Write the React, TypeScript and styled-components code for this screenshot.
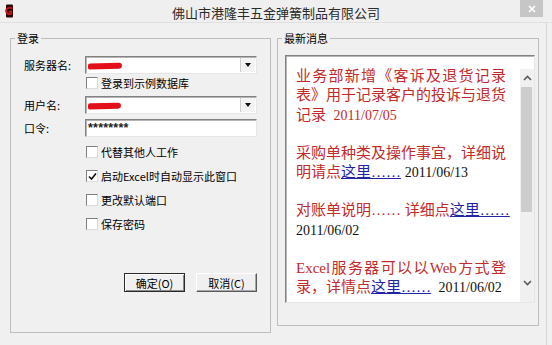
import React from 'react'
import styled, { createGlobalStyle, css } from 'styled-components'

const GlobalStyle = createGlobalStyle`
  html, body {
    margin: 0;
    padding: 0;
    background: #f0f0f0;
  }
  body {
    font-family: "Noto Sans CJK SC", "Liberation Sans", sans-serif;
    color: #000;
  }
`

const App = () => {
  return (
    <Window>
      <GlobalStyle />
      <TitleBar>
        <AppIcon viewBox="0 0 10 14" width="10" height="14">
          <rect x="2" y="0.5" width="7" height="13" rx="1" fill="#2b0707" />
          <path d="M8.5 4.5 C5 2.5, 0.5 5, 2.5 8.5 C4 11, 8 10.5, 7.5 8.2 C7 6.8, 5 7.4, 5.6 8.6" fill="none" stroke="#d4161c" strokeWidth="1.6" />
        </AppIcon>
        <Title>佛山市港隆丰五金弹簧制品有限公司</Title>
        <CloseButton>
          <svg viewBox="0 0 8 8" width="8" height="8">
            <path d="M1 1 L7 7 M7 1 L1 7" stroke="#fff" strokeWidth="1.6" />
          </svg>
        </CloseButton>
      </TitleBar>

      <Body>
        <Group $w={261} $h={303}>
          <Legend>登录</Legend>
          <LoginBody>
            <Field>
              <Label>服务器名:</Label>
              <Combo>
                <Redact />
                <DropButton><Arrow /></DropButton>
              </Combo>
            </Field>
            <CheckRow $h={18}>
              <CheckBox />
              <CheckText>登录到示例数据库</CheckText>
            </CheckRow>
            <Field $mt={4}>
              <Label>用户名:</Label>
              <Combo>
                <Redact $w={33} />
                <DropButton><Arrow /></DropButton>
              </Combo>
            </Field>
            <Field $mt={5} $h={17}>
              <Label>口令:</Label>
              <Password>********</Password>
            </Field>
            <Options>
              <CheckRow>
                <CheckBox />
                <CheckText>代替其他人工作</CheckText>
              </CheckRow>
              <CheckRow>
                <CheckBox>
                  <svg viewBox="0 0 9 9" width="9" height="9">
                    <path d="M1 4.5 L3.5 7 L8 1.5" fill="none" stroke="#111" strokeWidth="1.6" />
                  </svg>
                </CheckBox>
                <CheckText>启动Excel时自动显示此窗口</CheckText>
              </CheckRow>
              <CheckRow>
                <CheckBox />
                <CheckText>更改默认端口</CheckText>
              </CheckRow>
              <CheckRow>
                <CheckBox />
                <CheckText>保存密码</CheckText>
              </CheckRow>
            </Options>
            <ButtonRow>
              <Button $default>确定(O)</Button>
              <Button>取消(C)</Button>
            </ButtonRow>
          </LoginBody>
        </Group>

        <Group $w={262} $h={296}>
          <Legend>最新消息</Legend>
          <NewsBody>
            <NewsBox>
              <NewsText>
                <Message>
                  <Line $justify>业务部新增《客诉及退货记录</Line>
                  <Line>表》用于记录客户的投诉与退货</Line>
                  <Line>记录{'\u00a0 '}<DateText $red>2011/07/05</DateText></Line>
                </Message>
                <Message>
                  <Line $justify>采购单种类及操作事宜，详细说</Line>
                  <Line>明请点<Link>这里……</Link> <DateText>2011/06/13</DateText></Line>
                </Message>
                <Message>
                  <Line>对账单说明…… 详细点<Link>这里……</Link></Line>
                  <Line><DateText>2011/06/02</DateText></Line>
                </Message>
                <Message>
                  <Line $justify>Excel服务器可以以Web方式登</Line>
                  <Line>录，详情点<Link>这里……</Link>{'\u00a0 '}<DateText>2011/06/02</DateText></Line>
                </Message>
              </NewsText>
              <ScrollBar>
                <ScrollArrow>
                  <svg viewBox="0 0 9 6" width="9" height="6">
                    <path d="M1 5 L4.5 1.5 L8 5" fill="none" stroke="#5a5a5a" strokeWidth="1.6" />
                  </svg>
                </ScrollArrow>
                <Thumb />
                <Track />
                <ScrollArrow>
                  <svg viewBox="0 0 9 6" width="9" height="6">
                    <path d="M1 1 L4.5 4.5 L8 1" fill="none" stroke="#5a5a5a" strokeWidth="1.6" />
                  </svg>
                </ScrollArrow>
              </ScrollBar>
            </NewsBox>
          </NewsBody>
        </Group>
      </Body>
    </Window>
  )
}

export default App

const Window = styled.div`
  width: 552px;
  height: 345px;
  overflow: hidden;
  background: #f0f0f0;
`

const TitleBar = styled.div`
  display: grid;
  grid-template-columns: 1fr auto 1fr;
  align-items: start;
  height: 23px;
  box-sizing: border-box;
  border-bottom: 1px solid #e0e0e0;
  background: #efefef;
`

const AppIcon = styled.svg`
  margin: 4px 0 0 4px;
  display: block;
`

const Title = styled.div`
  margin-top: 3px;
  font-size: 13px;
  line-height: 20px;
  color: #2a2a2a;
  white-space: nowrap;
`

const CloseButton = styled.div`
  justify-self: end;
  margin-right: 9px;
  width: 23px;
  height: 17px;
  background: #c6c6c6;
  display: flex;
  align-items: center;
  justify-content: center;
`

const Body = styled.div`
  display: flex;
  align-items: flex-start;
  gap: 6px;
  width: 547px;
  height: 322px;
  box-sizing: border-box;
  padding: 7px 0 0 10px;
  border-right: 1px solid #d6d6d6;
`

const Group = styled.fieldset<{ $w: number; $h: number }>`
  margin: 0;
  padding: 0;
  min-width: 0;
  width: ${p => p.$w}px;
  height: ${p => p.$h}px;
  box-sizing: border-box;
  border: 1px solid #bdbdbd;
`

const Legend = styled.legend`
  margin-left: 4px;
  padding: 0 2px;
  font-size: 11px;
  line-height: 16px;
`

const LoginBody = styled.div`
  padding: 10px 13px 0 13px;
`

const Field = styled.div<{ $mt?: number; $h?: number }>`
  display: grid;
  grid-template-columns: 61px 172px;
  align-items: center;
  height: ${p => p.$h ?? 18}px;
  margin-top: ${p => p.$mt ?? 0}px;
`

const Label = styled.span`
  font-size: 11px;
  line-height: 14px;
`

const sunken = css`
  box-sizing: border-box;
  background: #fff;
  border: 1px solid;
  border-color: #828282 #e6e6e6 #e6e6e6 #828282;
  box-shadow: inset 1px 1px 0 #b4b4b4;
`

const Combo = styled.div`
  ${sunken};
  height: 100%;
  display: flex;
  align-items: center;
  justify-content: space-between;
  padding-left: 2px;
`

const Redact = styled.span<{ $w?: number }>`
  display: block;
  width: ${p => p.$w ?? 34}px;
  height: 6px;
  margin-top: 2px;
  border-radius: 3px 4px 4px 2px;
  background: #e3101a;
  transform: rotate(-1.5deg);
`

const DropButton = styled.div`
  width: 15px;
  height: 14px;
  margin-right: 1px;
  box-sizing: border-box;
  background: #f4f4f4;
  border-left: 1px solid #cfcfcf;
  display: flex;
  align-items: center;
  justify-content: center;
`

const Arrow = styled.span`
  width: 0;
  height: 0;
  border-left: 3.5px solid transparent;
  border-right: 3.5px solid transparent;
  border-top: 4px solid #111;
`

const Password = styled.div`
  ${sunken};
  height: 100%;
  padding-left: 2px;
  font-family: "Liberation Sans", sans-serif;
  font-weight: bold;
  font-size: 12.5px;
  line-height: 16px;
  letter-spacing: 0.2px;
  color: #222;
`

const Options = styled.div`
  margin-top: 4px;
`

const CheckRow = styled.div<{ $h?: number }>`
  display: flex;
  align-items: center;
  gap: 3px;
  height: ${p => p.$h ?? 24}px;
  padding-left: 62px;
`

const CheckBox = styled.span`
  width: 12px;
  height: 12px;
  box-sizing: border-box;
  background: #fff;
  border: 1px solid;
  border-color: #7e7e7e #dcdcdc #dcdcdc #7e7e7e;
  display: flex;
  align-items: center;
  justify-content: center;
`

const CheckText = styled.span`
  font-size: 11px;
  line-height: 14px;
  white-space: nowrap;
`

const ButtonRow = styled.div`
  display: flex;
  justify-content: flex-end;
  gap: 11px;
  margin-top: 37px;
`

const Button = styled.div<{ $default?: boolean }>`
  width: 61px;
  height: 19px;
  box-sizing: border-box;
  display: flex;
  align-items: center;
  justify-content: center;
  font-size: 11px;
  background: #f0f0f0;
  border: 1px solid;
  border-color: #fff #5a5a5a #5a5a5a #fff;
  box-shadow: inset -1px -1px 0 #a8a8a8;
  ${p => p.$default && css`
    border-color: #2a2a2a;
    box-shadow: inset 1px 1px 0 #fff, inset -1px -1px 0 #8a8a8a;
  `}
`

const NewsBody = styled.div`
  padding: 9px 3px 0 7px;
`

const NewsBox = styled.div`
  ${sunken};
  display: flex;
  height: 248px;
`

const NewsText = styled.div`
  flex: 1;
  overflow: hidden;
  padding: 11px 0 0 10px;
  font-family: "Liberation Serif", "Noto Sans CJK SC", serif;
  font-size: 15px;
  line-height: 19.3px;
  color: #c22a2c;
`

const Message = styled.div`
  margin-bottom: 19px;
`

const Line = styled.div<{ $justify?: boolean }>`
  width: 210px;
  white-space: ${p => (p.$justify ? 'normal' : 'nowrap')};
  ${p => p.$justify && css`
    text-align: justify;
    text-align-last: justify;
  `}
`

const Link = styled.span`
  color: #2323a8;
  text-decoration: underline;
`

const DateText = styled.span<{ $red?: boolean }>`
  font-size: 14px;
  color: ${p => (p.$red ? '#c22a2c' : '#111')};
`

const ScrollBar = styled.div`
  width: 14px;
  margin-top: 13px;
  padding-bottom: 10px;
  background: #f0f0f0;
  display: flex;
  flex-direction: column;
`

const ScrollArrow = styled.div`
  height: 18px;
  display: flex;
  align-items: center;
  justify-content: center;
`

const Thumb = styled.div`
  height: 125px;
  margin: 0 2px 0 1px;
  background: #cdcdcd;
`

const Track = styled.div`
  flex: 1;
`
